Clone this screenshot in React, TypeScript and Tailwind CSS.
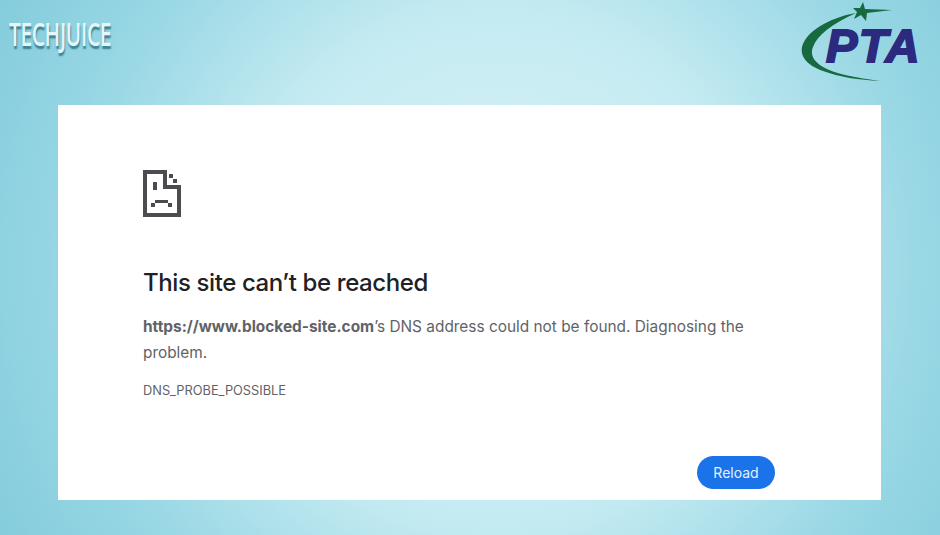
const sans = "font-['Inter','Liberation_Sans',sans-serif]";

function SadPage() {
  return (
    <svg width="38" height="47" viewBox="0 0 38 47" fill="#4a4c4f" className="block">
      <rect x="0" y="0" width="21" height="4" />
      <rect x="0" y="0" width="4" height="47" />
      <rect x="0" y="43" width="38" height="4" />
      <rect x="34" y="16" width="4" height="31" />
      <rect x="20" y="0" width="4" height="19" />
      <rect x="20" y="15" width="18" height="4" />
      <rect x="26" y="4" width="4" height="4" />
      <rect x="30" y="9" width="4" height="4" />
      <rect x="10" y="12" width="4" height="8" />
      <rect x="12" y="30" width="13" height="3" />
      <rect x="8" y="33" width="4" height="4" />
      <rect x="25" y="33" width="4" height="4" />
    </svg>
  );
}

function PtaLogo() {
  return (
    <div className="relative h-[84px] w-[120px]">
      <svg width="120" height="84" viewBox="0 0 120 84" className="absolute left-0 top-0">
        <path d="M57 13 C38 16 8 28 3 47 C1 58 10 66 24 71 C40 77 60 80 81 81 C58 78 36 74 24 67 C14 61 11 54 14 47 C18 36 32 24 57 13 Z" fill="#17693f" />
        <path d="M64 2 L66 9 L93 10 L68 13 L67 21 L62 15 L55 19 L58 12 L54 8 L61 8 Z" fill="#17693f" />
      </svg>
      <span className="absolute left-[27px] top-[22px] font-['Liberation_Sans',sans-serif] text-[47px] font-bold italic leading-[48px] tracking-[1.5px] text-[#2b2a7e] [-webkit-text-stroke:2px_#2b2a7e]">
        PTA
      </span>
    </div>
  );
}

export default function App() {
  return (
    <div className={`flex h-[535px] w-[940px] flex-col overflow-hidden bg-[radial-gradient(420px_420px_at_53%_50%,#d8f3f7_0%,#c5ebf2_60%,#9ad8e5_100%,#84ccdc_135%,#7ac6d8_165%)] ${sans}`}>
      <div className="flex h-[105px] shrink-0 items-start justify-between pl-[9px] pr-[21px]">
        <span className="mt-[12px] origin-left scale-x-[0.63] font-['Open_Sans',sans-serif] text-[33px] font-semibold leading-[44px] tracking-[-0.5px] text-[#e4f6f9] [text-shadow:1px_3px_2px_#3a7f93]">
          TECHJUICE
        </span>
        <PtaLogo />
      </div>
      <div className="ml-[58px] flex h-[395px] w-[823px] flex-col bg-white pl-[85px] pr-[106px] pt-[65px]">
        <SadPage />
        <h1 className="mt-[48px] text-[24px] font-medium leading-[36px] tracking-[-0.4px] text-[#202124]">
          This site can’t be reached
        </h1>
        <p className="mt-[13px] text-[15.4px] leading-[26px] text-[#5f6368]">
          <span className="font-bold">https://www.blocked-site.com</span>’s DNS address could not be found. Diagnosing the problem.
        </p>
        <p className="mt-[16px] text-[12.8px] leading-[18px] text-[#5f6368]">DNS_PROBE_POSSIBLE</p>
        <div className="mt-auto mb-[11px] flex justify-end">
          <button className="h-[33px] w-[78px] rounded-full bg-[#1a73e8] text-[14px] text-[#e8f0fe]">Reload</button>
        </div>
      </div>
    </div>
  );
}
